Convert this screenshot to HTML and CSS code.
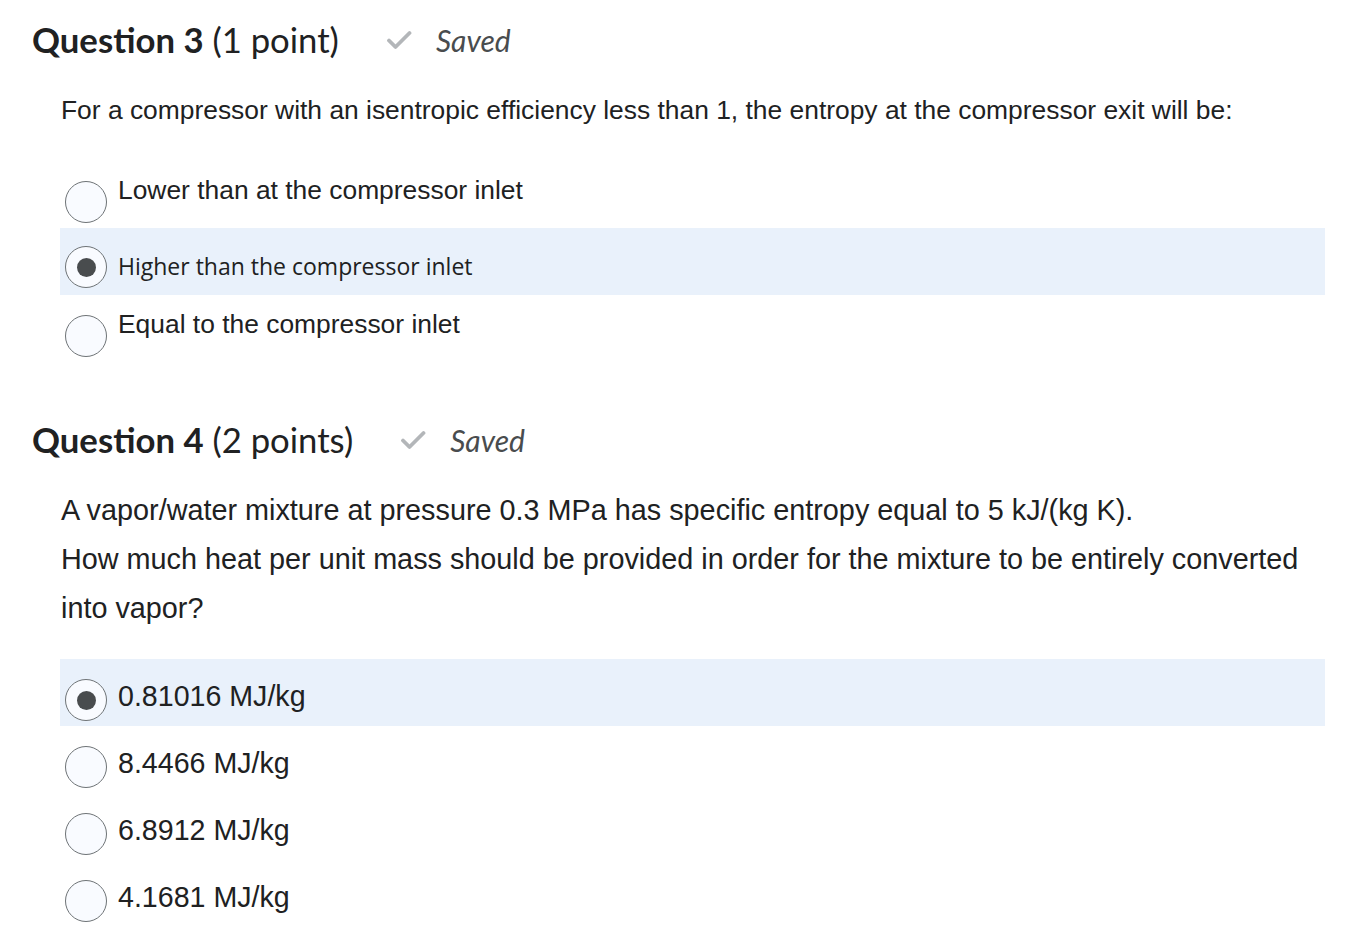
FILE: index.html
```html
<!DOCTYPE html>
<html lang="en">
<head>
<meta charset="utf-8">
<title>Quiz</title>
<link rel="stylesheet" href="styles.css">
</head>
<body>
<main class="quiz">
  <section class="question">
    <header class="q-head">
      <h2 class="q-title"><strong>Question 3</strong> (1 point)</h2>
      <span class="saved">
        <svg class="check" width="26" height="20" viewBox="0 0 26 20"><path d="M3 10.5 L9.5 17 L23.5 3" fill="none" stroke="#b3b6b9" stroke-width="3.8" stroke-linecap="round" stroke-linejoin="round"/></svg>
        <em>Saved</em>
      </span>
    </header>
    <p class="q-text">For a compressor with an isentropic efficiency less than 1, the entropy at the compressor exit will be:</p>
    <ul class="options">
      <li class="opt opt-raised"><span class="radio"></span><span class="label">Lower than at the compressor inlet</span></li>
      <li class="opt selected"><span class="radio"><span class="dot"></span></span><span class="label label-alt">Higher than the compressor inlet</span></li>
      <li class="opt opt-raised"><span class="radio"></span><span class="label">Equal to the compressor inlet</span></li>
    </ul>
  </section>

  <section class="question q4">
    <header class="q-head">
      <h2 class="q-title"><strong>Question 4</strong> (2 points)</h2>
      <span class="saved">
        <svg class="check" width="26" height="20" viewBox="0 0 26 20"><path d="M3 10.5 L9.5 17 L23.5 3" fill="none" stroke="#b3b6b9" stroke-width="3.8" stroke-linecap="round" stroke-linejoin="round"/></svg>
        <em>Saved</em>
      </span>
    </header>
    <p class="q-text">A vapor/water mixture at pressure 0.3 MPa has specific entropy equal to 5 kJ/(kg K).<br>How much heat per unit mass should be provided in order for the mixture to be entirely converted into vapor?</p>
    <ul class="options">
      <li class="opt selected"><span class="radio"><span class="dot"></span></span><span class="label">0.81016 MJ/kg</span></li>
      <li class="opt"><span class="radio"></span><span class="label">8.4466 MJ/kg</span></li>
      <li class="opt"><span class="radio"></span><span class="label">6.8912 MJ/kg</span></li>
      <li class="opt"><span class="radio"></span><span class="label">4.1681 MJ/kg</span></li>
    </ul>
  </section>
</main>
</body>
</html>
```

FILE: styles.css
```css
* { box-sizing: border-box; }

html, body {
  margin: 0;
  padding: 0;
  background: #ffffff;
}

body {
  color: #202122;
  font-family: "Liberation Sans", Arial, sans-serif;
}

.quiz {
  padding: 20px 37px 0 32px;
}

.question.q4 {
  margin-top: 58px;
}

.q-head {
  display: flex;
  align-items: center;
  height: 40px;
}

.q-title {
  margin: 0;
  font-family: Lato, "Open Sans", sans-serif;
  font-weight: 400;
  font-size: 34.7px;
  line-height: 40px;
  color: #202122;
}

.q-title strong {
  font-weight: 700;
}

.saved {
  display: flex;
  align-items: center;
  margin-left: 47px;
  color: #494c4e;
}

.check {
  display: block;
  margin-right: 24px;
}

.saved em {
  font-family: Lato, "Open Sans", sans-serif;
  font-style: italic;
  font-size: 30px;
  line-height: 40px;
}

.q-text {
  margin: 26px 0 0 29px;
  font-size: 26.4px;
  line-height: 49px;
  color: #202122;
}

.q4 .q-text {
  font-size: 28.8px;
}

.options {
  list-style: none;
  margin: 26px 0 0 28px;
  padding: 0;
}

.opt {
  display: flex;
  align-items: flex-start;
  height: 67px;
  padding: 20px 0 0 5px;
}

.opt.selected {
  background: #e9f1fb;
}

.radio {
  flex: none;
  display: flex;
  align-items: center;
  justify-content: center;
  width: 42px;
  height: 42px;
  border: 1px solid #6e7376;
  border-radius: 50%;
  background: #f9fbff;
}

.dot {
  width: 19px;
  height: 19px;
  border-radius: 50%;
  background: #494c4e;
}

.label {
  margin-left: 11px;
  margin-top: 2px;
  font-size: 26.4px;
  line-height: 30px;
  color: #202122;
}

.q4 .label {
  font-size: 28.6px;
}

.opt-raised .label {
  margin-top: -6px;
}

.q4 .opt.selected .label {
  margin-top: 2px;
}

.label-alt {
  font-family: "Open Sans", "Noto Sans", sans-serif;
  font-size: 23px;
  margin-top: 5px;
  color: #202122;
}

.question:first-child .opt.selected {
  padding-top: 18px;
}
```
